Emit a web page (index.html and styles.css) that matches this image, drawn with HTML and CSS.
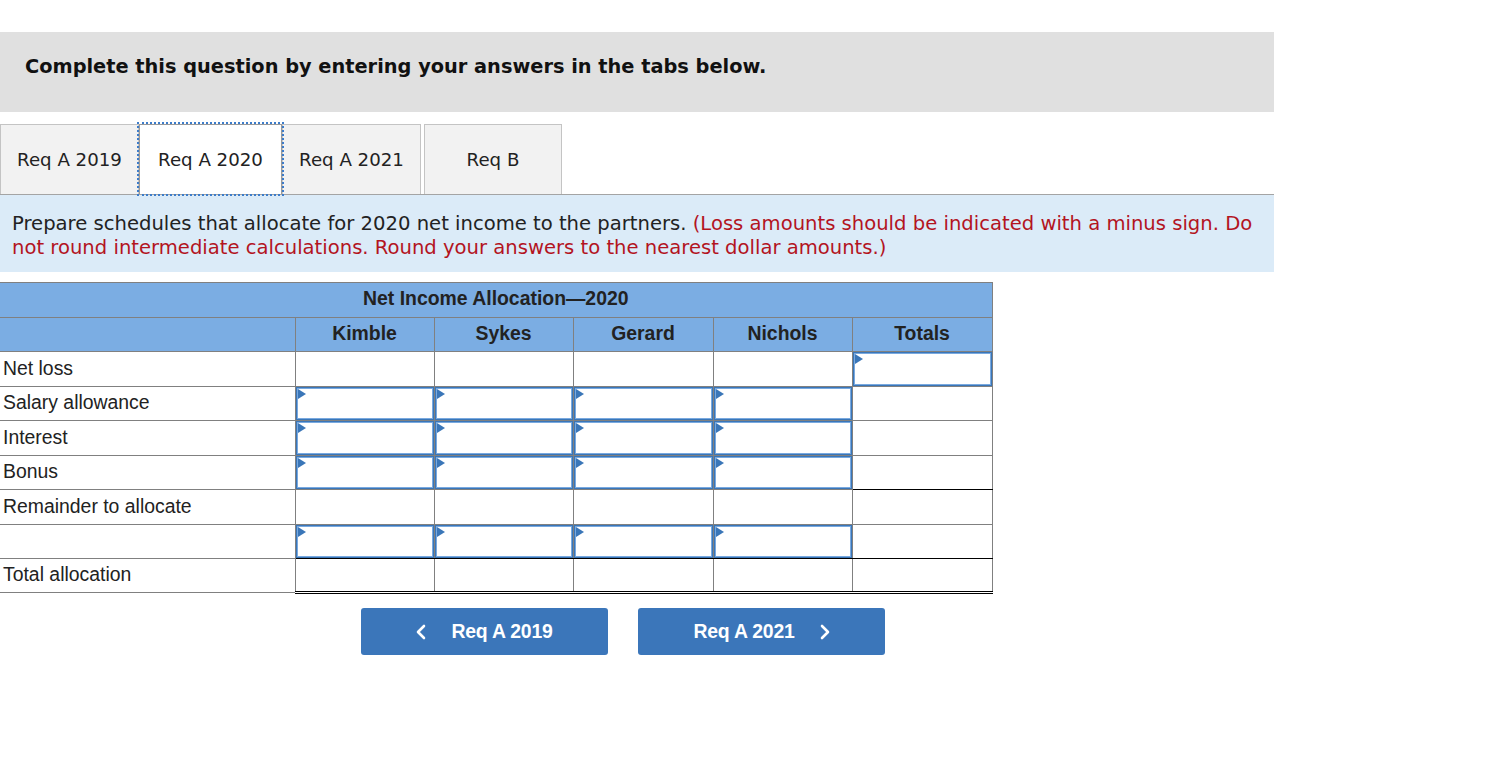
FILE: index.html
```html
<!DOCTYPE html>
<html>
<head>
<meta charset="utf-8">
<link rel="stylesheet" href="styles.css">
</head>
<body>
<div class="page">
  <div class="banner">Complete this question by entering your answers in the tabs below.</div>
  <div class="tabs">
    <div class="tab">Req A 2019</div>
    <div class="tab active">Req A 2020</div>
    <div class="tab">Req A 2021</div>
    <div class="tab last">Req B</div>
  </div>
  <div class="instructions">Prepare schedules that allocate for 2020 net income to the partners. <span class="red">(Loss amounts should be indicated with a minus sign. Do not round intermediate calculations. Round your answers to the nearest dollar amounts.)</span></div>
  <table class="grid">
    <colgroup>
      <col class="c-label"><col class="c-a"><col class="c-a"><col class="c-b"><col class="c-a"><col class="c-b">
    </colgroup>
    <tr class="r-title"><th colspan="6">Net Income Allocation—2020</th></tr>
    <tr class="r-head"><th></th><th>Kimble</th><th>Sykes</th><th>Gerard</th><th>Nichols</th><th>Totals</th></tr>
    <tr class="r-a"><td class="lbl">Net loss</td><td></td><td></td><td></td><td></td><td class="in"><div class="box"></div></td></tr>
    <tr class="r-b"><td class="lbl">Salary allowance</td><td class="in"><div class="box"></div></td><td class="in"><div class="box"></div></td><td class="in"><div class="box"></div></td><td class="in"><div class="box"></div></td><td></td></tr>
    <tr class="r-a"><td class="lbl">Interest</td><td class="in"><div class="box"></div></td><td class="in"><div class="box"></div></td><td class="in"><div class="box"></div></td><td class="in"><div class="box"></div></td><td></td></tr>
    <tr class="r-b"><td class="lbl">Bonus</td><td class="in"><div class="box"></div></td><td class="in"><div class="box"></div></td><td class="in"><div class="box"></div></td><td class="in"><div class="box"></div></td><td class="btm-black"></td></tr>
    <tr class="r-a"><td class="lbl">Remainder to allocate</td><td></td><td></td><td></td><td></td><td></td></tr>
    <tr class="r-b"><td class="lbl"></td><td class="in btm-black"><div class="box"></div></td><td class="in btm-black"><div class="box"></div></td><td class="in btm-black"><div class="box"></div></td><td class="in btm-black"><div class="box"></div></td><td class="btm-black"></td></tr>
    <tr class="r-b total"><td class="lbl">Total allocation</td><td class="dbl"></td><td class="dbl"></td><td class="dbl"></td><td class="dbl"></td><td class="dbl"></td></tr>
  </table>
  <div class="nav">
    <div class="btn"><svg class="chev" width="10" height="16" viewBox="0 0 10 16"><polyline points="8,2 2,8 8,14" fill="none" stroke="#fff" stroke-width="2.6" stroke-linecap="round" stroke-linejoin="round"/></svg><span>Req A 2019</span></div>
    <div class="btn next"><span>Req A 2021</span><svg class="chev" width="10" height="16" viewBox="0 0 10 16"><polyline points="2,2 8,8 2,14" fill="none" stroke="#fff" stroke-width="2.6" stroke-linecap="round" stroke-linejoin="round"/></svg></div>
  </div>
</div>
</body>
</html>
```

FILE: styles.css
```css
html, body {
  margin: 0;
  padding: 0;
  background: #fff;
}
.page {
  width: 1274px;
  padding-top: 32px;
}
.banner {
  height: 80px;
  background: #e0e0e0;
  box-sizing: border-box;
  padding-left: 25px;
  display: flex;
  align-items: center;
  font-family: "DejaVu Sans", Verdana, sans-serif;
  font-weight: bold;
  font-size: 19.35px;
  color: #111;
  padding-bottom: 12px;
}
.tabs {
  display: flex;
  margin-top: 12px;
  height: 70px;
  border-bottom: 1px solid #a4a4a4;
}
.tab {
  box-sizing: border-box;
  height: 70px;
  width: 139px;
  background: #f2f2f2;
  border: 1px solid #c4c4c4;
  border-bottom: none;
  display: flex;
  align-items: center;
  justify-content: center;
  font-family: "DejaVu Sans", Verdana, sans-serif;
  font-size: 18.2px;
  color: #222;
}
.tab.active {
  width: 143px;
  background: #fff;
  border: 1px solid #9a9a9a;
  border-bottom: none;
  outline: 2px dotted #3d7cc9;
  outline-offset: 0;
  position: relative;
  z-index: 1;
}
.tab:nth-child(3) {
  width: 139px;
}
.tab.last {
  width: 138px;
  margin-left: 3px;
}
.instructions {
  background: #dbebf8;
  box-sizing: border-box;
  height: 77px;
  padding: 17px 12px 0 12px;
  font-family: "DejaVu Sans", Verdana, sans-serif;
  font-size: 19.6px;
  line-height: 24px;
  color: #222;
}
.red {
  color: #b3141f;
}
.grid {
  margin-top: 10px;
  width: 992px;
  border-collapse: collapse;
  table-layout: fixed;
  font-family: "Liberation Sans", Arial, sans-serif;
  font-size: 19.4px;
  color: #222;
}
.c-label { width: 295px; }
.c-a { width: 139px; }
.c-b { width: 140px; }
.grid th {
  background: #7badE3;
  border: 1px solid #808080;
  font-weight: bold;
  padding: 0;
  text-align: center;
  color: #222;
}
.r-title { height: 35px; }
.r-head { height: 34px; }
.r-a { height: 35px; }
.r-b { height: 34px; }
.r-title th { padding-bottom: 3px; }
.r-head th { padding-bottom: 2px; }
.grid td {
  border: 1px solid #808080;
  padding: 0;
}
.grid td.lbl {
  border-left: none;
  padding-left: 3px;
  padding-bottom: 2px;
  white-space: nowrap;
  color: #222;
}
.grid tr:first-child th {
  border-left: none;
}
.grid tr.r-head th:first-child {
  border-left: none;
}
.grid td.in {
  position: relative;
}
.box {
  position: absolute;
  left: 0;
  top: 0;
  right: 0;
  bottom: 0;
  border: 1px solid #3a76b8;
  box-shadow: inset 0 0 0 1px #79a9df;
}
.box::before {
  content: "";
  position: absolute;
  left: 1px;
  top: 1px;
  width: 0;
  height: 0;
  border-top: 5px solid transparent;
  border-bottom: 5px solid transparent;
  border-left: 8px solid #3a76b8;
}
.grid td.btm-black {
  border-bottom: 1px solid #000;
}
.grid td.dbl {
  border-bottom: 3px double #000;
}
.nav {
  display: flex;
  gap: 30px;
  padding-left: 361px;
  margin-top: 14px;
}
.btn {
  width: 247px;
  height: 47px;
  background: #3b76ba;
  border-radius: 3px;
  display: flex;
  align-items: center;
  justify-content: center;
  gap: 25px;
  color: #fff;
  font-family: "Liberation Sans", Arial, sans-serif;
  font-weight: bold;
  font-size: 19.4px;
  letter-spacing: -0.2px;
}
.btn .chev {
  display: block;
}
```
